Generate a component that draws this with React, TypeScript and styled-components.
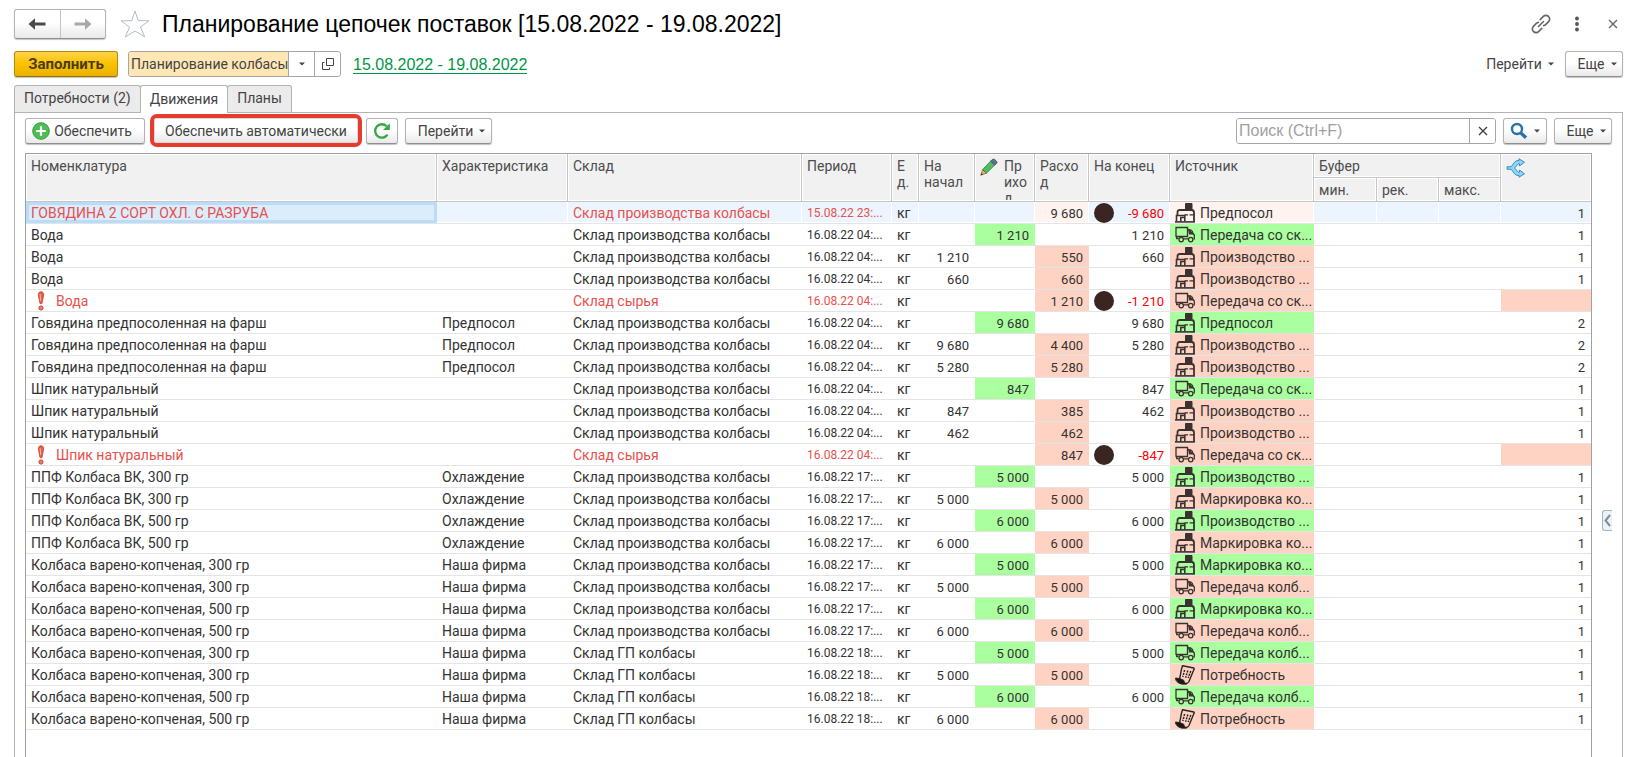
import React from 'react';
import styled, { createGlobalStyle, css } from 'styled-components';

const UI_FONT = 'Roboto, "Noto Sans", sans-serif';
const ALT_FONT = '"Liberation Sans", Arial, sans-serif';

const GlobalStyle = createGlobalStyle`
  *, *::before, *::after { box-sizing: border-box; }
  body {
    margin: 0;
    background: #fff;
    color: #333;
    font: 14px/20px ${UI_FONT};
  }
  button, input, select { font: inherit; color: inherit; margin: 0; }
`;

type IconName = 'factory' | 'truck' | 'doc';
type Tone = 'in' | 'out' | 'pale';

/* ---------- layout ---------- */

const Page = styled.main`
  display: flex;
  flex-direction: column;
  height: 100vh;
  overflow: hidden;
  padding: 9px 3px 0 14px;
`;

const Bar = styled.div`
  display: flex;
  align-items: center;
`;

const TitleBar = styled(Bar)`
  height: 30px;
`;

const CommandBar = styled(Bar)`
  height: 26px;
  margin-top: 12px;
`;

const Spacer = styled.div`
  flex: 1;
`;

const Title = styled.h1`
  margin: 0 0 0 12px;
  font: 400 23px/28px ${ALT_FONT};
  color: #000;
  white-space: nowrap;
`;

/* ---------- controls ---------- */

const raised = css`
  background: linear-gradient(#fff 45%, #e9e9e9);
  border: 1px solid #b3b3b3;
  border-bottom-color: #8f8f8f;
  border-radius: 3px;
  box-shadow: 0 1px 1px #c4c4c4;
`;

const History = styled.div`
  ${raised}
  display: flex;
  width: 92px;
  height: 30px;
  margin-right: 14px;
`;

const HistoryButton = styled.button`
  flex: 1;
  display: grid;
  place-items: center;
  padding: 0;
  background: none;
  border: 0;
  color: #4a4a4a;
  & + & {
    border-left: 1px solid #c4c4c4;
    color: #a8a8a8;
  }
`;

const BareButton = styled.button`
  display: grid;
  place-items: center;
  padding: 0;
  background: none;
  border: 0;
  color: #666;
`;

const WindowTools = styled.div`
  display: grid;
  grid-template-columns: 20px 52px 20px;
  align-items: center;
`;

const FillButton = styled.button`
  width: 104px;
  height: 26px;
  padding: 0;
  border: 1px solid #b38d0a;
  border-bottom-color: #957300;
  border-radius: 3px;
  background: linear-gradient(#ffd34a, #fbc200 50%, #e9b000);
  box-shadow: 0 1px 1px #c4c4c4;
  font-size: 15px;
  font-weight: 700;
  color: #4a3c14;
`;

const Combo = styled.div`
  display: flex;
  width: 213px;
  height: 26px;
  margin: 0 12px 0 10px;
  border: 1px solid #a6a6a6;
  border-radius: 3px;
  overflow: hidden;
`;

const ComboInput = styled.input`
  flex: 1;
  min-width: 0;
  padding: 0 0 0 2px;
  border: 0;
  background: #ffe7b5;
  color: #444;
`;

const ComboButton = styled.button`
  width: 26px;
  display: grid;
  place-items: center;
  padding: 0;
  background: #fff;
  border: 0;
  border-left: 1px solid #a6a6a6;
  color: #444;
`;

const PeriodLink = styled.a`
  padding-top: 2px;
  font: 16px/16px ${ALT_FONT};
  color: #009646;
  text-decoration: none;
  border-bottom: 1px solid #009646;
`;

const Button = styled.button<{ $w: number }>`
  ${raised}
  display: flex;
  align-items: center;
  justify-content: center;
  gap: 6px;
  width: ${(p) => p.$w}px;
  height: 26px;
  padding: 0;
  color: #444;
  white-space: nowrap;
`;

const MenuButton = styled(Button)`
  padding-left: 6px;
`;

const IconButton = styled(Button)`
  gap: 4px;
  padding-right: 6px;
`;

const FlatButton = styled(Button)`
  margin-right: 4px;
  background: none;
  border: 0;
  box-shadow: none;
`;

const Highlight = styled.div`
  margin: 0 4px 0 5px;
  border: 4px solid #e63c30;
  border-radius: 7px;
  & > button { border-color: #d9d9d9; box-shadow: none; height: 25px; }
`;

const SearchBox = styled.div`
  display: flex;
  flex: 0 1 260px;
  height: 26px;
  margin-right: 7px;
  border: 1px solid #a6a6a6;
  border-radius: 3px;
  overflow: hidden;
`;

const SearchInput = styled.input`
  flex: 1;
  min-width: 0;
  padding: 0 2px;
  border: 0;
  font: 16px/24px ${ALT_FONT};
  &::placeholder { color: #a0a0a0; opacity: 1; }
`;

/* ---------- tabs ---------- */

const Tabs = styled.div`
  display: flex;
  height: 28px;
  margin-top: 8px;
`;

const Tab = styled.button<{ $active?: boolean }>`
  padding: 0 9px 2px;
  border: 1px solid #b3b3b3;
  border-bottom: 0;
  border-radius: 3px 3px 0 0;
  background: ${(p) => (p.$active ? '#fff' : '#ebebeb')};
  color: #444;
  height: ${(p) => (p.$active ? 28 : 27)}px;
  z-index: ${(p) => (p.$active ? 1 : 0)};
  & + & { margin-left: -1px; }
`;

const Panel = styled.section`
  flex: 1;
  min-height: 0;
  display: flex;
  flex-direction: column;
  margin-top: -1px;
  padding: 0 0 0 10px;
  border: solid #b3b3b3;
  border-width: 1px 1px 0;
`;

const Toolbar = styled(Bar)`
  height: 33px;
  margin: 1px 10px 6px 0;
`;

const Gap = styled.div`
  width: 7px;
`;

const Content = styled.div`
  flex: 1;
  min-height: 0;
  display: grid;
  grid-template-columns: 1fr 30px;
`;

const SideHandle = styled.button`
  width: 10px;
  height: 21px;
  margin: 357px 0 0 10px;
  padding: 0;
  display: grid;
  place-items: center;
  border: 1px solid #a9b4be;
  border-right: 0;
  border-radius: 3px 0 0 3px;
  background: #e9f2fb;
  color: #8a8a8a;
`;

/* ---------- table ---------- */

const TableFrame = styled.div`
  border: solid #a0a0a0;
  border-width: 1px 1px 0;
  overflow: hidden;
`;

const Table = styled.table`
  width: 100%;
  table-layout: fixed;
  border-collapse: separate;
  border-spacing: 0;
`;

const Col = styled.col<{ $w?: number }>`
  width: ${(p) => (p.$w ? `${p.$w}px` : 'auto')};
`;

const Th = styled.th`
  height: 24px;
  padding: 4px 4px 0 5px;
  border-right: 1px solid #c6c6c6;
  border-bottom: 1px solid #c6c6c6;
  background: #f1f1f1;
  box-shadow: inset 0 0 0 1px #fff;
  font-weight: 400;
  line-height: 16px;
  text-align: left;
  vertical-align: top;
  color: #4d4d4d;
  white-space: nowrap;
  &:last-child { border-right: 0; }
  thead tr + tr &:last-child { border-right: 1px solid #c6c6c6; }
`;

const HeadWithIcon = styled.div`
  display: flex;
  gap: 6px;
  height: 42px;
  overflow: hidden;
  & > svg { flex: none; }
`;

const Row = styled.tr<{ $selected?: boolean }>`
  ${(p) =>
    p.$selected &&
    css`
      & > td { background: #ecf5fe; box-shadow: inset -1px 0 #fff, inset 0 -1px #fff; }
      & > td:first-child {
        background: #dbecfb;
        box-shadow: inset 0 0 0 3px #b9dcfa;
      }
    `}
`;

const Td = styled.td<{ $num?: boolean; $date?: boolean; $tone?: Tone; $color?: string }>`
  && {
    ${(p) => p.$color && `color: ${p.$color};`}
    ${(p) => p.$tone === 'in' && 'background: #aaff9f;'}
    ${(p) => p.$tone === 'out' && 'background: #ffd3c3;'}
    ${(p) => p.$tone === 'pale' && 'background: #fff3ef;'}
  }
  height: 22px;
  padding: 2px 6px 0 5px;
  border-bottom: 1px solid #e4e4e4;
  line-height: 19px;
  vertical-align: top;
  white-space: nowrap;
  ${(p) => p.$num && 'text-align: right; font-size: 13px;'}
  ${(p) => p.$date && 'font-size: 12px;'}
`;

const IconText = styled.div`
  display: flex;
  align-items: center;
  gap: 5px;
  height: 19px;
  & > svg { flex: none; margin-top: -1px; }
`;

const Balance = styled.div`
  display: flex;
  align-items: center;
  justify-content: space-between;
  height: 19px;
`;

const Dot = styled.i`
  width: 20px;
  height: 20px;
  margin-top: -1px;
  border-radius: 50%;
  background: #3a2522;
`;

/* ---------- icons ---------- */

const Caret = () => (
  <svg width="6" height="4" viewBox="0 0 6 4" aria-hidden="true">
    <path d="M0 0.5h6L3 3.5z" fill="#444" />
  </svg>
);

const Arrow = ({ flip }: { flip?: boolean }) => (
  <svg width="18" height="14" viewBox="0 0 18 14" aria-hidden="true">
    <g transform={flip ? 'matrix(-1 0 0 1 18 0)' : undefined}>
      <path d="M0.5 7 7 1.2V5.4H17.5V8.6H7V12.8z" fill="currentColor" />
    </g>
  </svg>
);

const Star = () => (
  <svg width="30" height="28" viewBox="0 0 30 28" aria-hidden="true">
    <path
      d="M15 1 18.2 10.6 29 10.8 20.4 17 24.8 27 15 21 5.2 27 9.6 17 1 10.8 11.8 10.6z"
      fill="#fff"
      stroke="#b4bcc4"
    />
  </svg>
);

const LinkIcon = () => (
  <svg width="20" height="20" viewBox="0 0 20 20" fill="none" stroke="#666" strokeWidth="1.6" strokeLinecap="round" aria-hidden="true">
    <path d="M9.2 5.6 12.4 2.4a3.5 3.5 0 0 1 5 0l.2.2a3.5 3.5 0 0 1 0 5L14.6 10.6a3.5 3.5 0 0 1-2 1" />
    <path d="M10.8 14.4 7.6 17.6a3.5 3.5 0 0 1-5 0l-.2-.2a3.5 3.5 0 0 1 0-5L5.4 9.4a3.5 3.5 0 0 1 2-1" />
    <path d="M7.5 12.5 12.5 7.5" />
  </svg>
);

const Kebab = () => (
  <svg width="6" height="16" viewBox="0 0 6 16" fill="#555" aria-hidden="true">
    <circle cx="3" cy="2.5" r="1.9" />
    <circle cx="3" cy="8" r="1.9" />
    <circle cx="3" cy="13.5" r="1.9" />
  </svg>
);

const Cross = () => (
  <svg width="10" height="10" viewBox="0 0 10 10" stroke="currentColor" strokeWidth="1.4" aria-hidden="true">
    <path d="M1 1 9 9M9 1 1 9" />
  </svg>
);

const OpenIcon = () => (
  <svg width="12" height="12" viewBox="0 0 12 12" fill="none" stroke="#444" aria-hidden="true">
    <path d="M4.5 0.5h7v7h-7z" />
    <path d="M2.5 4.5h-2v7h7v-2" />
  </svg>
);

const PlusIcon = () => (
  <svg width="18" height="18" viewBox="0 0 18 18" aria-hidden="true">
    <circle cx="9" cy="9" r="8.3" fill="#4fbd57" stroke="#2f9e3b" />
    <path d="M9 4.2v9.6M4.2 9h9.6" stroke="#fff" strokeWidth="2.2" />
  </svg>
);

const RefreshIcon = () => (
  <svg width="18" height="18" viewBox="0 0 18 18" aria-hidden="true">
    <path d="M14.5 12.6A6.7 6.7 0 1 1 13.6 4.2" fill="none" stroke="#35a844" strokeWidth="2.3" />
    <path d="M16.8 1.2V8H10z" fill="#35a844" />
  </svg>
);

const SearchIcon = () => (
  <svg width="18" height="18" viewBox="0 0 18 18" fill="none" stroke="#2a72ae" aria-hidden="true">
    <circle cx="7" cy="7" r="5" strokeWidth="2.4" />
    <path d="M11 11 16 15.8" strokeWidth="3.4" />
  </svg>
);

const PencilIcon = () => (
  <svg width="18" height="18" viewBox="0 0 18 18" strokeWidth="0.8" strokeLinejoin="round" aria-hidden="true">
    <path d="M0.8 17.2 2.6 11.6 6.4 15.2z" fill="#f3b34d" stroke="#8a6a33" />
    <path d="M2.6 11.6 10.6 3.2 14.8 7 6.4 15.2z" fill="#4ebd62" stroke="#2d7c3f" />
    <path d="M10.6 3.2 12.4 1.4q1.2-.8 2.4.2l1.8 1.7q1 1.2 0 2.2L14.8 7z" fill="#5b7185" stroke="#43525f" />
    <path d="M0.8 17.2 1.5 15.1 3 16.5z" fill="#333" />
  </svg>
);

const BranchIcon = () => (
  <svg width="20" height="20" viewBox="0 0 20 20" aria-hidden="true">
    <path
      d="M1 8.7H5.2L8.5 4.2Q9.8 2.6 12 2.6H13V0.8L18.5 4.2 13.5 8V5.8H12.4L8.6 10 12.4 14.2H13.5V12L18.5 15.8 13 19.2V17.4H12Q9.8 17.4 8.5 15.8L5.2 11.3H1z"
      fill="#8fd3f6"
      stroke="#2f86b8"
      strokeWidth="0.9"
      strokeLinejoin="round"
    />
  </svg>
);

const Chevron = () => (
  <svg width="7" height="13" viewBox="0 0 7 13" fill="none" stroke="currentColor" strokeWidth="2" aria-hidden="true">
    <path d="M6 1 1.5 6.5 6 12" />
  </svg>
);

const AlertIcon = () => (
  <svg width="20" height="20" viewBox="0 0 20 20" aria-hidden="true">
    <path d="M7.3 3.8C7.3 1.7 8.3.8 10 .8s2.7.9 2.7 3L11 12.6H9z" fill="#e2604a" stroke="#c8402c" strokeWidth="0.8" />
    <path d="M9.2 3.2 9.7 10" stroke="#f7b9aa" />
    <circle cx="10" cy="17" r="2.1" fill="#e9836c" stroke="#c8402c" />
  </svg>
);

const RowIcon = ({ name }: { name: IconName }) => {
  if (name === 'factory')
    return (
      <svg width="20" height="20" viewBox="0 0 20 20" fill="none" stroke="#3a3230" aria-hidden="true">
        <path d="M10.5 0.5H17V6.5H10.5z" fill="#3a3230" />
        <path d="M2.5 12V9Q2.500 7 5 7H16.500Q19 7 19 9.500V18.500" strokeWidth="1.8" />
        <path d="M9.500 11.800H13M14.500 11.800H19" strokeWidth="1.3" />
        <path d="M1.500 18.500V12.500H9.800V18.500M5.800 18.500V14.500H9.800" strokeWidth="1.6" />
        <path d="M0 18.900H20" strokeWidth="1.6" />
      </svg>
    );
  if (name === 'truck')
    return (
      <svg width="20" height="20" viewBox="0 0 20 20" fill="none" stroke="#3a3230" strokeWidth="1.3" aria-hidden="true">
        <path d="M3.500 13.500H1.700V11.500M1 11.500V2.500H12.500V11.500H0.500M8.500 13.800H13" />
        <path d="M12.500 5H16Q17.600 5.500 18.200 8.800L19.300 10V13.800H18.500" />
        <path d="M14 5 18 8.800H14.500z" fill="#3a3230" />
        <circle cx="6.200" cy="14.600" r="2.200" />
        <circle cx="15.700" cy="14.600" r="2.200" />
      </svg>
    );
  return (
    <svg width="20" height="20" viewBox="0 0 20 20" fill="none" stroke="#2b2523" aria-hidden="true">
      <path d="M7.500 0.800 18.800 3Q19.600 3.600 18.800 4.800L14 16.500Q12.500 19 10 18.300L4.500 14.500 6.500 4z" strokeWidth="1.4" />
      <path d="M0.500 13 4.800 13.600 8.800 15.300Q8.800 18.500 11.500 19 6 20 2.800 17.500 0.500 15.500 0.500 13z" fill="#1d1817" />
      <path d="M9.600 5 7.800 12M12.800 5.500 10.600 12.800M15.800 6 13.200 13" strokeWidth="1.5" strokeDasharray="2 1" />
    </svg>
  );
};

/* ---------- data ---------- */

interface Movement {
  item: string;
  spec?: string;
  store: string;
  period: string;
  start?: string;
  income?: string;
  outcome?: string;
  end?: string;
  icon: IconName;
  source: string;
  level?: string;
  alert?: boolean;
  selected?: boolean;
}

const PROD = 'Склад производства колбасы';
const RAW = 'Склад сырья';
const GP = 'Склад ГП колбасы';
const BEEF = 'Говядина предпосоленная на фарш';
const FAT = 'Шпик натуральный';
const FIRM = 'Наша фирма';

const T04 = '16.08.22 04:...';
const T17 = '16.08.22 17:...';
const T18 = '16.08.22 18:...';

const MAKE = 'Производство ...';
const MARK = 'Маркировка ко...';
const MOVE = 'Передача со ск...';
const SHIP = 'Передача колб...';
const NEED = 'Потребность';

const movements: Movement[] = [
  { item: 'ГОВЯДИНА 2 СОРТ ОХЛ. С РАЗРУБА', store: PROD, period: '15.08.22 23:...', outcome: '9 680', end: '-9 680', icon: 'factory', source: 'Предпосол', level: '1', selected: true },
  { item: 'Вода', store: PROD, period: T04, income: '1 210', end: '1 210', icon: 'truck', source: MOVE, level: '1' },
  { item: 'Вода', store: PROD, period: T04, start: '1 210', outcome: '550', end: '660', icon: 'factory', source: MAKE, level: '1' },
  { item: 'Вода', store: PROD, period: T04, start: '660', outcome: '660', icon: 'factory', source: MAKE, level: '1' },
  { item: 'Вода', store: RAW, period: T04, outcome: '1 210', end: '-1 210', icon: 'truck', source: MOVE, alert: true },
  { item: BEEF, spec: 'Предпосол', store: PROD, period: T04, income: '9 680', end: '9 680', icon: 'factory', source: 'Предпосол', level: '2' },
  { item: BEEF, spec: 'Предпосол', store: PROD, period: T04, start: '9 680', outcome: '4 400', end: '5 280', icon: 'factory', source: MAKE, level: '2' },
  { item: BEEF, spec: 'Предпосол', store: PROD, period: T04, start: '5 280', outcome: '5 280', icon: 'factory', source: MAKE, level: '2' },
  { item: FAT, store: PROD, period: T04, income: '847', end: '847', icon: 'truck', source: MOVE, level: '1' },
  { item: FAT, store: PROD, period: T04, start: '847', outcome: '385', end: '462', icon: 'factory', source: MAKE, level: '1' },
  { item: FAT, store: PROD, period: T04, start: '462', outcome: '462', icon: 'factory', source: MAKE, level: '1' },
  { item: FAT, store: RAW, period: T04, outcome: '847', end: '-847', icon: 'truck', source: MOVE, alert: true },
  { item: 'ППФ Колбаса ВК, 300 гр', spec: 'Охлаждение', store: PROD, period: T17, income: '5 000', end: '5 000', icon: 'factory', source: MAKE, level: '1' },
  { item: 'ППФ Колбаса ВК, 300 гр', spec: 'Охлаждение', store: PROD, period: T17, start: '5 000', outcome: '5 000', icon: 'factory', source: MARK, level: '1' },
  { item: 'ППФ Колбаса ВК, 500 гр', spec: 'Охлаждение', store: PROD, period: T17, income: '6 000', end: '6 000', icon: 'factory', source: MAKE, level: '1' },
  { item: 'ППФ Колбаса ВК, 500 гр', spec: 'Охлаждение', store: PROD, period: T17, start: '6 000', outcome: '6 000', icon: 'factory', source: MARK, level: '1' },
  { item: 'Колбаса варено-копченая, 300 гр', spec: FIRM, store: PROD, period: T17, income: '5 000', end: '5 000', icon: 'factory', source: MARK, level: '1' },
  { item: 'Колбаса варено-копченая, 300 гр', spec: FIRM, store: PROD, period: T17, start: '5 000', outcome: '5 000', icon: 'truck', source: SHIP, level: '1' },
  { item: 'Колбаса варено-копченая, 500 гр', spec: FIRM, store: PROD, period: T17, income: '6 000', end: '6 000', icon: 'factory', source: MARK, level: '1' },
  { item: 'Колбаса варено-копченая, 500 гр', spec: FIRM, store: PROD, period: T17, start: '6 000', outcome: '6 000', icon: 'truck', source: SHIP, level: '1' },
  { item: 'Колбаса варено-копченая, 300 гр', spec: FIRM, store: GP, period: T18, income: '5 000', end: '5 000', icon: 'truck', source: SHIP, level: '1' },
  { item: 'Колбаса варено-копченая, 300 гр', spec: FIRM, store: GP, period: T18, start: '5 000', outcome: '5 000', icon: 'doc', source: NEED, level: '1' },
  { item: 'Колбаса варено-копченая, 500 гр', spec: FIRM, store: GP, period: T18, income: '6 000', end: '6 000', icon: 'truck', source: SHIP, level: '1' },
  { item: 'Колбаса варено-копченая, 500 гр', spec: FIRM, store: GP, period: T18, start: '6 000', outcome: '6 000', icon: 'doc', source: NEED, level: '1' },
];

const columnWidths = [undefined, 131, 234, 90, 27, 56, 60, 54, 81, 144, 63, 62, 62, 90];

const MovementRow = ({ m }: { m: Movement }) => {
  const tone: Tone = m.selected ? 'pale' : m.income ? 'in' : 'out';
  const warn = m.alert || m.selected ? '#e8504c' : undefined;
  const negative = m.end?.startsWith('-');
  return (
    <Row $selected={m.selected}>
      <Td $color={warn}>
        {m.alert ? (
          <IconText>
            <AlertIcon />
            {m.item}
          </IconText>
        ) : (
          m.item
        )}
      </Td>
      <Td>{m.spec}</Td>
      <Td $color={warn}>{m.store}</Td>
      <Td $date $color={warn}>{m.period}</Td>
      <Td>кг</Td>
      <Td $num>{m.start}</Td>
      <Td $num $tone={m.income ? 'in' : undefined}>{m.income}</Td>
      <Td $num $tone={m.outcome ? tone : undefined}>{m.outcome}</Td>
      <Td $num $color={negative ? '#ff0000' : undefined}>
        {negative ? (
          <Balance>
            <Dot />
            {m.end}
          </Balance>
        ) : (
          m.end
        )}
      </Td>
      <Td $tone={tone}>
        <IconText>
          <RowIcon name={m.icon} />
          {m.source}
        </IconText>
      </Td>
      <Td />
      <Td />
      <Td />
      <Td $num $tone={m.alert ? 'out' : undefined}>{m.level}</Td>
    </Row>
  );
};

export default function App() {
  return (
    <>
      <GlobalStyle />
      <Page>
        <TitleBar as="header">
          <History>
            <HistoryButton aria-label="Назад"><Arrow /></HistoryButton>
            <HistoryButton aria-label="Вперед"><Arrow flip /></HistoryButton>
          </History>
          <BareButton aria-label="В избранное"><Star /></BareButton>
          <Title>Планирование цепочек поставок [15.08.2022 - 19.08.2022]</Title>
          <Spacer />
          <WindowTools>
            <BareButton aria-label="Получить ссылку"><LinkIcon /></BareButton>
            <BareButton aria-label="Меню"><Kebab /></BareButton>
            <BareButton aria-label="Закрыть"><Cross /></BareButton>
          </WindowTools>
        </TitleBar>

        <CommandBar>
          <FillButton>Заполнить</FillButton>
          <Combo>
            <ComboInput aria-label="Сценарий" defaultValue="Планирование колбасы" />
            <ComboButton aria-label="Выбрать"><Caret /></ComboButton>
            <ComboButton aria-label="Открыть"><OpenIcon /></ComboButton>
          </Combo>
          <PeriodLink href="#period">15.08.2022 - 19.08.2022</PeriodLink>
          <Spacer />
          <FlatButton $w={82}>Перейти <Caret /></FlatButton>
          <MenuButton $w={58}>Еще <Caret /></MenuButton>
        </CommandBar>

        <Tabs role="tablist">
          <Tab role="tab">Потребности (2)</Tab>
          <Tab role="tab" $active aria-selected="true">Движения</Tab>
          <Tab role="tab">Планы</Tab>
        </Tabs>

        <Panel>
          <Toolbar>
            <IconButton $w={120}><PlusIcon />Обеспечить</IconButton>
            <Highlight>
              <Button $w={204}>Обеспечить автоматически</Button>
            </Highlight>
            <Button $w={32} aria-label="Обновить"><RefreshIcon /></Button>
            <Gap />
            <MenuButton $w={87}>Перейти <Caret /></MenuButton>
            <Spacer />
            <SearchBox>
              <SearchInput type="text" aria-label="Поиск" placeholder="Поиск (Ctrl+F)" />
              <ComboButton aria-label="Очистить"><Cross /></ComboButton>
            </SearchBox>
            <Button $w={44} aria-label="Найти"><SearchIcon /><Caret /></Button>
            <Gap />
            <MenuButton $w={58}>Еще <Caret /></MenuButton>
          </Toolbar>

          <Content>
            <TableFrame>
              <Table>
                <colgroup>
                  {columnWidths.map((w, i) => (
                    <Col key={i} $w={w} />
                  ))}
                </colgroup>
                <thead>
                  <tr>
                    <Th rowSpan={2}>Номенклатура</Th>
                    <Th rowSpan={2}>Характеристика</Th>
                    <Th rowSpan={2}>Склад</Th>
                    <Th rowSpan={2}>Период</Th>
                    <Th rowSpan={2}>Е<br />д.</Th>
                    <Th rowSpan={2}>На<br />начал</Th>
                    <Th rowSpan={2}>
                      <HeadWithIcon>
                        <PencilIcon />
                        <span>Пр<br />ихо<br />д</span>
                      </HeadWithIcon>
                    </Th>
                    <Th rowSpan={2}>Расхо<br />д</Th>
                    <Th rowSpan={2}>На конец</Th>
                    <Th rowSpan={2}>Источник</Th>
                    <Th colSpan={3}>Буфер</Th>
                    <Th rowSpan={2} aria-label="Уровень"><BranchIcon /></Th>
                  </tr>
                  <tr>
                    <Th>мин.</Th>
                    <Th>рек.</Th>
                    <Th>макс.</Th>
                  </tr>
                </thead>
                <tbody>
                  {movements.map((m, i) => (
                    <MovementRow key={i} m={m} />
                  ))}
                </tbody>
              </Table>
            </TableFrame>
            <SideHandle aria-label="Показать панель"><Chevron /></SideHandle>
          </Content>
        </Panel>
      </Page>
    </>
  );
}
